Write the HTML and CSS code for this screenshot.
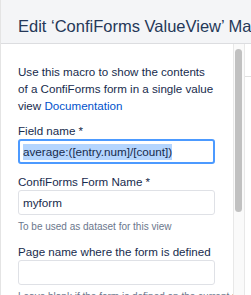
FILE: index.html
```html
<!DOCTYPE html>
<html>
<head>
<meta charset="utf-8">
<link rel="stylesheet" href="styles.css">
</head>
<body>
<div class="dialog">
  <div class="header">
    <h2 class="title">Edit ‘ConfiForms ValueView’ Macro</h2>
  </div>
  <div class="main">
    <div class="form">
      <p class="intro">Use this macro to show the contents<br>of a ConfiForms form in a single value<br>view <a class="link" href="#">Documentation</a></p>
      <div class="field">
        <div class="label">Field name *</div>
        <div class="input focused"><span class="sel">average:([entry.num]/[count])</span></div>
      </div>
      <div class="field">
        <div class="label">ConfiForms Form Name *</div>
        <div class="input">myform</div>
        <div class="desc">To be used as dataset for this view</div>
      </div>
      <div class="field">
        <div class="label">Page name where the form is defined</div>
        <div class="input"></div>
        <div class="desc">Leave blank if the form is defined on the current page</div>
      </div>
    </div>
    <div class="track"><div class="thumb"></div></div>
    <div class="side"><div class="side-top"></div></div>
  </div>
</div>
</body>
</html>
```

FILE: styles.css
```css
html, body {
  margin: 0;
  padding: 0;
  background: #ffffff;
  overflow: hidden;
}
body {
  font-family: "Liberation Sans", Arial, sans-serif;
  color: #172b4d;
  width: 251px;
  height: 295px;
}
.dialog {
  display: flex;
  flex-direction: column;
  height: 295px;
  border-left: 1px solid #e4e4e4;
}
.header {
  height: 44px;
  box-sizing: border-box;
  background: #f4f5f7;
  border-bottom: 1px solid #dcdde0;
  padding: 14px 0 0 17px;
  overflow: hidden;
  white-space: nowrap;
}
.title {
  margin: 0;
  font-size: 16.5px;
  font-weight: normal;
  line-height: 24px;
  color: #253858;
}
.main {
  flex: 1;
  display: flex;
  min-height: 0;
}
.form {
  width: 215px;
  padding: 19px 0 0 17px;
  font-size: 11.6px;
  line-height: 17px;
  overflow: hidden;
}
.intro {
  margin: 0;
  white-space: nowrap;
}
.link {
  color: #0052cc;
  text-decoration: none;
}
.field {
  margin-top: 8px;
}
.field + .field {
  margin-top: 9px;
}
.label {
  white-space: nowrap;
}
.input {
  width: 197px;
  height: 25px;
  box-sizing: border-box;
  border: 1px solid #dfe1e6;
  border-radius: 3px;
  padding: 0 4px;
  display: flex;
  align-items: center;
  font-size: 11.7px;
  background: #ffffff;
  white-space: nowrap;
}
.input.focused {
  border: 2px solid #4c9aff;
  padding: 0 3px;
}
.sel {
  background: #b4d5fe;
  line-height: 16px;
}
.desc {
  margin-top: 5px;
  font-size: 10px;
  line-height: 14px;
  color: #6b778c;
  white-space: nowrap;
}
.track {
  width: 10px;
  border-left: 1px solid #e8e8e8;
  border-right: 1px solid #e8e8e8;
  background: #fafafa;
  padding-top: 5px;
}
.thumb {
  width: 7px;
  height: 163px;
  margin-left: 1px;
  background: #c1c1c1;
  border-radius: 4px;
}
.side {
  flex: 1;
  background: #ffffff;
}
.side-top {
  height: 32px;
  border-bottom: 1px solid #e0e0e0;
}
```
